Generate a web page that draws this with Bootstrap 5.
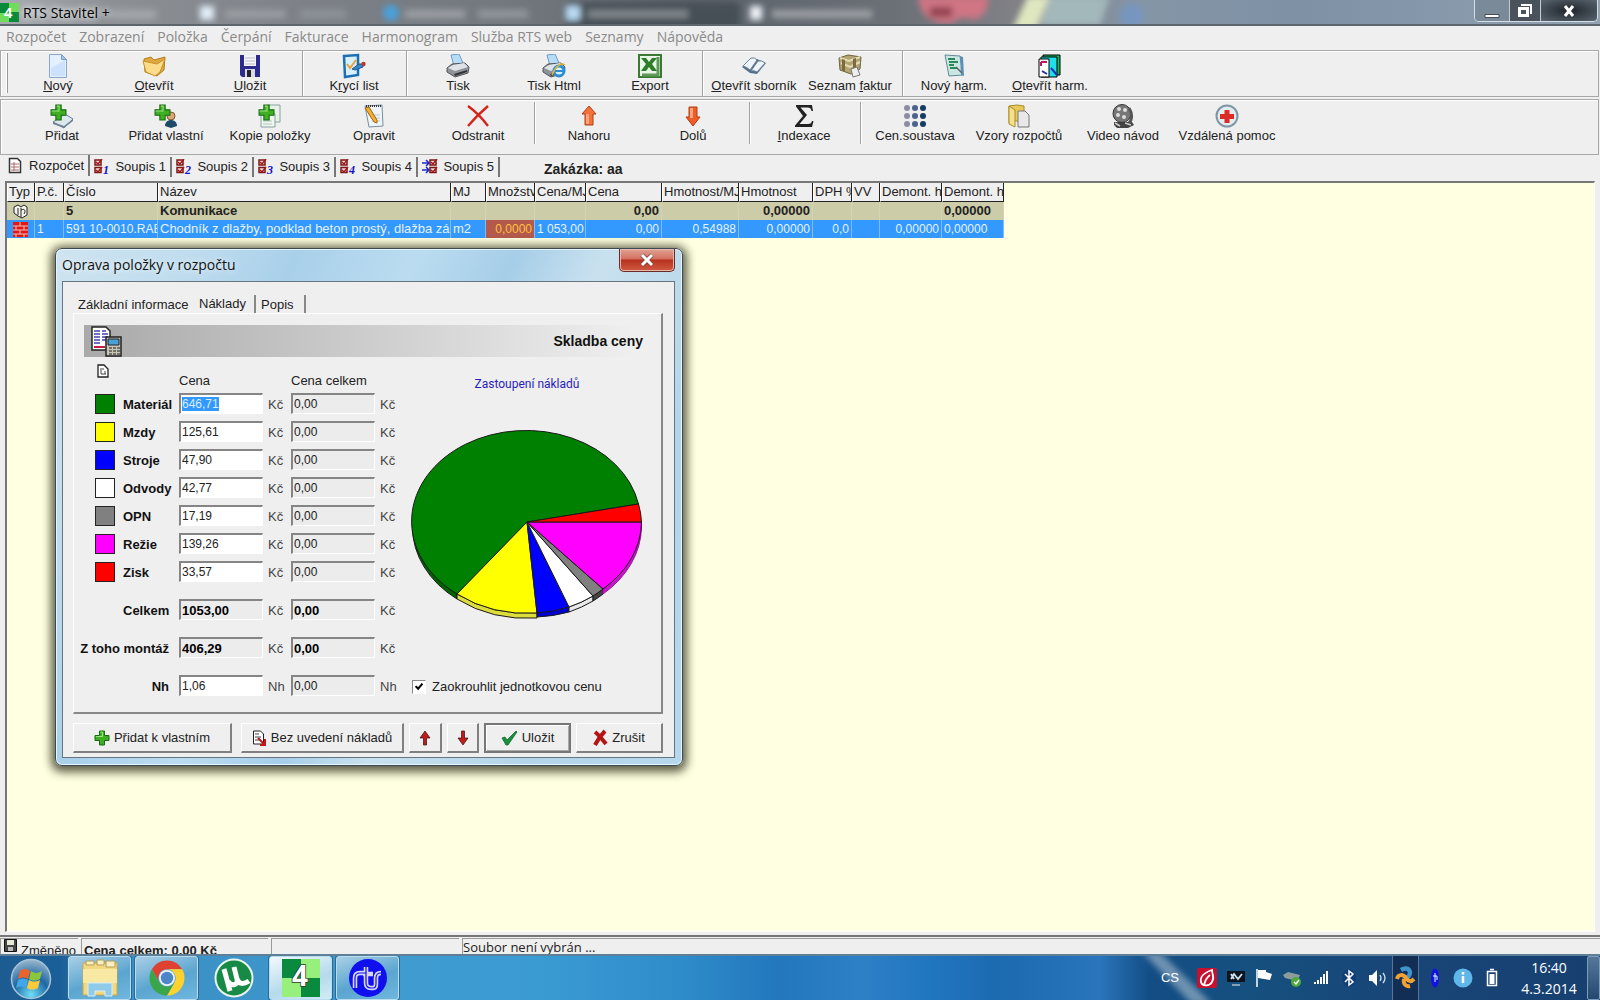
<!DOCTYPE html>
<html lang="cs">
<head>
<meta charset="utf-8">
<meta name="viewport" content="width=device-width, initial-scale=1">
<title>RTS Stavitel +</title>
<link href="https://cdn.jsdelivr.net/npm/bootstrap@5.3.0/dist/css/bootstrap.min.css" rel="stylesheet">
<style>
:root{--ui:"Liberation Sans",Arial,sans-serif;--seg:"Open Sans","Noto Sans",sans-serif;--face:#efefef}
body{font:13px/16px var(--ui);color:#222;background:var(--face);overflow:hidden}
svg{flex:none;display:block;overflow:visible}
button{font:inherit;color:inherit}
.app{height:100vh;min-height:640px}
/* title bar */
.titlebar{height:26px;background:linear-gradient(90deg,#a9adb1 0,#8d9196 110px,#7d8288 300px,#72777e 520px,#5c636b 700px,#6c7178 900px,#858489 1040px,#8495a6 1140px,#7f91a5 1300px,#8799ab 1460px,#93a1b0);border-bottom:2px solid #5d656d;overflow:hidden}
.glass{left:0;top:0;height:24px;width:100%;overflow:hidden}
.caption{font:14px/25px var(--seg);color:#000;text-shadow:0 0 6px #fff,0 0 8px #fff}
.winbtns{border:1px solid #d5dde5;border-top:0;border-radius:0 0 5px 5px;height:22px;overflow:hidden;margin-right:2px}
.winbtns button{border:0;border-right:1px solid #c3ccd4;background:#7b8a99;padding:0;height:21px;display:flex;align-items:center;justify-content:center}
.winbtns button:nth-child(2){background:#4a525b}
.winbtns button:nth-child(3){border:0;background:radial-gradient(ellipse at center,#20242a,#596570)}
/* menu */
.menubar{height:24px;padding:0 0 2px 6px;gap:13px;font:14px/18px var(--seg)}
.menubar a{color:#8a8a8a;text-decoration:none}
/* tool strips */
.strip{border:1px solid #a8a8a8;box-shadow:inset 1px 1px #fff;padding:3px 0 0 9px;margin-right:1px}
.strip button{border:0;background:none;padding:0;width:96px;display:flex;flex-direction:column;align-items:center;white-space:nowrap}
.strip-top{height:47px}
.strip-low{height:56px;margin-top:2px;padding-top:4px}
.strip-low button{width:104px}
.strip .vr-sep{width:8px;margin-top:-3px;background:linear-gradient(#a3a3a3,#a3a3a3) 4px 0/1px 100% no-repeat,linear-gradient(#fff,#fff) 5px 0/1px 100% no-repeat}
.strip-low .vr-sep{width:7px;height:42px;margin-top:-2px}
.grip{width:2px;height:40px;margin:-1px 2px 0 -4px;border-right:1px solid #999;border-left:1px solid #fff}
/* tabs */
.maintabs{height:26px;padding-left:8px}
.maintabs button{border:0;border-right:2px solid #777;background:none;padding:0 4px;height:20px;margin:2px 0 0;width:82px;display:flex;align-items:center;justify-content:space-between;white-space:nowrap}
.maintabs button.active{margin-top:0;padding-left:0;height:21px}
.order{font:bold 14px/18px var(--ui);margin:5px 0 0 44px}
/* grid */
.sheet{background:#ffffe1;border:2px solid #777;border-right:1px solid #fff;border-bottom:1px solid #fff;margin:0 5px 3px 5px;overflow:hidden;min-height:0}
.budget{table-layout:fixed;width:997px;border-collapse:separate;border-spacing:0}
.budget th,.budget td{height:18px;padding:0 2px;line-height:18px;overflow:hidden;white-space:nowrap;border-right:1px solid #dcdcc4}
.budget th{height:19px;padding:0 1px;font-weight:400;background:var(--face);border-right:1px solid #222;border-bottom:1px solid #222;border-left:1px solid #fff}
.budget .grp td{background:#cccca8;font-weight:700;border-color:#d4d4b4}
.budget .sel td{background:#3399ff;color:#e4f2ff;border-color:#7fbdf5;font-size:12px}
.budget .sel td.edit{background:#b35a4c;color:#ffc03c}
.budget .sel td.wide{font-size:13px}
/* status bar */
.statusbar{height:19px;border-top:2px solid #777;padding:1px 0 0;gap:3px;overflow:hidden}
.statusbar>div{border-top:1px solid #9a9a9a;border-left:1px solid #9a9a9a;height:17px;overflow:hidden;white-space:nowrap}
/* dialog */
.dlg{left:55px;top:248px;width:628px;border:1px solid #3d4a54;border-radius:7px;background:linear-gradient(115deg,#cfe4f0 0,#bedcee 130px,#a9d0ea 220px,#bbdcf0 330px,#a6cee8 420px,#c9e1ef 500px,#b3d5e9 640px,#b5d8ee);box-shadow:inset 0 0 0 1px #e6f4fb,0 2px 10px 4px rgba(40,40,20,.75);padding:0 7px 7px 6px}
.dlg-head{height:32px}
.dlg-title{font:14px/32px var(--seg);color:#111;text-shadow:0 0 6px #fff}
.dlg-close{width:56px;height:23px;border:1px solid #6b2a25;border-top:0;border-radius:0 0 5px 5px;background:linear-gradient(#e0a396,#d2705f 45%,#b8311f 50%,#cf5b42);box-shadow:inset 0 0 0 1px #eab7ac;padding:0;display:flex;align-items:center;justify-content:center}
.client{border:1px solid #66757f;background:var(--face);padding:13px 11px 4px 10px}
.subtabs button{border:0;background:none;padding:2px 0 0 5px;text-align:left;height:18px;border-right:2px solid transparent;white-space:nowrap}
.subtabs button.active{padding-top:0}
.page{border:1px solid #fff;border-right:2px solid #888;border-bottom:2px solid #888;height:401px;padding-top:11px}
.banner{height:32px;margin:0 10px;padding:0 8px 0 7px;background:linear-gradient(90deg,#a9a9a9,#efefef 97%);font:bold 14px/32px var(--ui);color:#111}
.formcol{width:332px}
.frow{height:28px}
.frow.total{height:38px}
.sw{width:20px;height:20px;border:1px solid #222;margin:1px 8px 0 21px}
.frow label{font-weight:700;width:56px;padding-top:4px;white-space:nowrap;color:#111}
.frow label.long{width:105px;padding-right:10px;text-align:right}
.frow input{width:84px;height:21px;border:0;border-top:2px solid #858585;border-left:2px solid #858585;border-right:1px solid #fff;border-bottom:1px solid #fff;padding:0 1px;font:12px/17px var(--ui);color:#222;background:#fff;outline:0;border-radius:0}
.frow input[readonly]{background:#ececec}
.frow.total input.sum{font:bold 13px/17px var(--ui);color:#000}
.frow input::selection{background:#3399ff;color:#d8ecff}
.frow span{width:28px;padding:4px 0 0 5px;color:#444}
.charttitle{font:12px/16px Roboto,var(--ui);color:#2a1eb8}
.rounding .form-check-input{width:14px;height:14px;margin:1px 6px 0 0;float:none;border:1px solid #888;border-right-color:#fff;border-bottom-color:#fff;border-radius:0;background-color:#fff;box-shadow:none}
.rounding .form-check-input:checked{background-image:url("data:image/svg+xml,%3csvg xmlns='http://www.w3.org/2000/svg' viewBox='0 0 14 14'%3e%3cpath fill='none' stroke='%23000' stroke-width='2.4' d='M3 6l3 3 5-6'/%3e%3c/svg%3e")}
.actions{gap:5px;padding-top:9px}
.push{height:30px;border:1px solid #fff;border-right:2px solid #808080;border-bottom:2px solid #808080;background:var(--face);padding:0;display:flex;align-items:center;justify-content:center;gap:4px;white-space:nowrap;width:87px}
.push.primary{border:2px solid #777;box-shadow:inset 1px 1px #fff,inset -1px -1px #aaa}
/* taskbar */
.taskbar{height:46px;border-top:2px solid #5f7f96;overflow:hidden;background:linear-gradient(90deg,#1d5c91 0,#1b5f98 60px,#3a8fc4 130px,#3f9bd0 420px,#3a9bd3 540px,#2f8cca 680px,#2277bd 780px,#2e80c6 860px,#2076c0 930px,#1c6ab0 1000px,#2a75bb 1100px,#134d84 1150px,#15507f 1250px,#184577 1400px,#174070)}
.orb{width:68px;border:0;background:none;padding:0 0 0 10px}
.task{width:63px;height:44px;border:1px solid #b8dcf0;border-radius:3px;background:linear-gradient(160deg,#a9cfe6,#5ba5d0 55%,#6fb7de);padding:0;margin-right:4px;display:flex;align-items:center;justify-content:center;box-shadow:0 0 0 1px #2c6a94}
.task.front{background:linear-gradient(160deg,#f2f9fc,#b4daec 60%,#d2ecf6)}
.task.flat{background:none;border-color:transparent;box-shadow:none}
.streak{left:1130px;top:0;overflow:hidden}
.tray{gap:10px;color:#fff}
.clock{font:14px/21px var(--seg);text-align:center;width:76px}
.agent{margin:0 -2px 0 -5px}
.peek{width:13px;height:44px;border:1px solid #7d9cba;background:linear-gradient(#56779a,#23486f);border-radius:2px;padding:0;margin-left:-10px}
</style>
</head>
<body>
<svg width="0" height="0" class="position-absolute" aria-hidden="true">
<defs>
<symbol id="plus" viewBox="0 0 16 16"><path d="M5.500 1h5v4.500H15v5h-4.500V15h-5v-4.500H1v-5h4.500z" fill="#3fae22" stroke="#176b12"/><path d="M6.500 2h2v4.500H2v-.1" fill="none" stroke="#9be47c"/></symbol>
<symbol id="printer" viewBox="0 0 24 24"><path d="M5 1l8-1 4 9-9 3z" fill="#b7dcf8" stroke="#6c9cc4"/><path d="M1 14l5-4 13-1 4 4-1 6-13 4-8-5z" fill="#8f949b" stroke="#50555c"/><path d="M2 14l7 3 13-4-4-4-11 2z" fill="#dfe3e8"/><path d="M8 20l13-4v2l-12 4z" fill="#333"/></symbol>
<symbol id="checks" viewBox="0 0 9 15"><path d="M1 1h6v5H1zM1 8.500h6v5H1z" fill="#f3d7d7" stroke="#7c1616" stroke-width="1.500"/><path d="M2 3l2 2 4-5M2 11l2 2 4-5" fill="none" stroke="#a01818" stroke-width="1.500"/></symbol>
<symbol id="book" viewBox="0 0 24 24"><path d="M0 13L9 4l6 1 9 4-9 11-7-1z" fill="#53708a"/><path d="M1 12L9 4q4-1 6 2L8 16q-3-3-7-4zM9 17l7-10q4-1 7 2l-8 9q-3-2-6-1z" fill="#eef4f9" stroke="#6b8296"/></symbol>
</defs>
</svg>

<div class="app d-flex flex-column position-relative">
  <header class="titlebar d-flex justify-content-between position-relative flex-shrink-0">
    <svg class="glass position-absolute" aria-hidden="true">
      <filter id="soft" x="-20%" y="-60%" width="140%" height="220%"><feGaussianBlur stdDeviation="3"/></filter>
      <g filter="url(#soft)">
        <rect x="565" y="2" width="175" height="30" rx="6" fill="#474f57"/>
        <rect x="110" y="10" width="46" height="9" fill="#a3a7ab"/>
        <rect x="200" y="6" width="14" height="14" fill="#e2edf7"/><rect x="225" y="10" width="60" height="8" fill="#9a9ea3"/><rect x="300" y="10" width="46" height="8" fill="#8e9398"/>
        <circle cx="391" cy="13" r="8" fill="#4aa1dc"/><rect x="405" y="10" width="60" height="8" fill="#9ba0a5"/><rect x="478" y="10" width="50" height="8" fill="#92979c"/>
        <rect x="566" y="6" width="14" height="14" fill="#b9dcf3"/><rect x="588" y="10" width="100" height="8" fill="#7f868c"/>
        <rect x="750" y="6" width="12" height="14" fill="#eef3f8"/><rect x="772" y="10" width="100" height="8" fill="#9ca0a5"/>
        <path d="M918-4h70q2 18-14 24-12-6-24 4-30 0-32-28z" fill="#cf7583"/><rect x="930" y="7" width="22" height="10" fill="#92424e"/>
        <path d="M1012 30l16-34h22l-14 34z" fill="#dfe6c0"/><path d="M1050-4h60l-10 30h-60z" fill="#a3b8bb"/><circle cx="1132" cy="16" r="12" fill="#7696c0"/>
      </g>
    </svg>
    <div class="d-flex position-relative">
      <svg width="19" height="22" viewBox="0 0 19 22"><path d="M0 3h19v19H0z" fill="#0b8a3a"/><path d="M9 3h10v9H9zM0 13h9v9H0z" fill="#6fdc5c"/><text x="4" y="18" font-family="Liberation Sans" font-weight="700" font-size="15" fill="#fff">4</text></svg>
      <div class="caption ps-1">RTS Stavitel +</div>
    </div>
    <div class="winbtns d-flex position-relative">
      <button aria-label="Minimalizovat" style="width:35px"><svg width="18" height="18"><path d="M2 12.500h14v3H2z" fill="#fff" stroke="#454e57"/></svg></button>
      <button aria-label="Obnovit" style="width:31px"><svg width="18" height="18"><path d="M5 3h10v9" fill="none" stroke="#fff" stroke-width="2"/><path d="M3.500 6.500h8v7h-8z" fill="none" stroke="#fff" stroke-width="3"/></svg></button>
      <button aria-label="Zavřít" style="width:56px"><svg width="14" height="14"><path d="M3 2l8 10M11 2L3 12" stroke="#fff" stroke-width="3"/></svg></button>
    </div>
  </header>

  <nav class="menubar d-flex align-items-center flex-shrink-0">
    <a href="#">Rozpočet</a><a href="#">Zobrazení</a><a href="#">Položka</a><a href="#">Čerpání</a><a href="#">Fakturace</a><a href="#">Harmonogram</a><a href="#">Služba RTS web</a><a href="#">Seznamy</a><a href="#">Nápověda</a>
  </nav>

  <div class="strip strip-top d-flex flex-shrink-0">
    <i class="grip"></i>
    <button><svg width="24" height="24"><path d="M3.500.500h12l5 5v18h-17z" fill="#e3f0fd" stroke="#8ba6c6"/><path d="M5 14l14-8v16H5z" fill="#cbe2fa"/><path d="M15.500.500v5h5z" fill="#9cc3ea" stroke="#7d9dc2"/></svg><span><u>N</u>ový</span></button>
    <button><svg width="24" height="24"><path d="M2 5l7-2 3 3 11-3-1 13-7 6-12-4z" fill="#e0a93e" stroke="#b27d20"/><path d="M1 7l14 3 8-5-5 13-5 4-9-4z" fill="#fbdc88" stroke="#c7922f"/></svg><span><u>O</u>tevřít</span></button>
    <button><svg width="24" height="24"><path d="M2 1h20v22H4l-2-2z" fill="#2c2a8c"/><path d="M6 1h12v11H6z" fill="#f4f4fb"/><path d="M7 4h10M7 7h10M7 10h10" stroke="#b9b9cc"/><path d="M7 15h10v8H7z" fill="#d9d9ea"/><path d="M9 16h4v7H9z" fill="#222"/></svg><span><u>U</u>ložit</span></button>
    <i class="vr-sep"></i>
    <button><svg width="24" height="24"><path d="M2 2l14-1v20L3 23z" fill="#d8efff" stroke="#1b6fb5" stroke-width="2.500"/><path d="M5 10l3 4 6-8" fill="none" stroke="#e8a33b" stroke-width="2"/><path d="M10 15l7-5h4v3l-8 3z" fill="#3987c8" stroke="#195a92"/><circle cx="21.500" cy="10" r="2.200" fill="#b33a2e"/></svg><span>K<u>r</u>ycí list</span></button>
    <i class="vr-sep"></i>
    <button><svg width="24" height="24"><use href="#printer"/></svg><span>Tisk</span></button>
    <button><svg width="24" height="24"><use href="#printer"/><circle cx="17" cy="17" r="5" fill="#d9f0ff" stroke="#2c8fd6" stroke-width="3"/><path d="M13 17h8" stroke="#2c8fd6" stroke-width="2"/><path d="M10 21C13 13 19 8 23 11" fill="none" stroke="#e5b63a" stroke-width="1.500"/></svg><span>Tisk Html</span></button>
    <button><svg width="24" height="24"><path d="M1 1h22v22H1z" fill="#e9f5e6" stroke="#3b7a35" stroke-width="2"/><path d="M20 3v18H4" fill="none" stroke="#5c9a56" stroke-width="3"/><path d="M3 4h5l3 4 3-4h5l-5 6 5 7h-5l-3-4-3 4H3l5-7z" fill="#2b7d28"/></svg><span>Export</span></button>
    <i class="vr-sep"></i>
    <button><svg width="24" height="24"><use href="#book"/></svg><span><u>O</u>tevřít sborník</span></button>
    <button><svg width="24" height="24"><path d="M1 4l9-3 13 2-1 12-9 5-11-4z" fill="#b3a672" stroke="#6d6440"/><path d="M2 4l9 3 11-4M3 9l9 4 10-5" fill="none" stroke="#e3ddb4" stroke-width="2"/><path d="M4 5l3 1v12l-3-2zM15 5l3-1v11l-3 1z" fill="#7d6a40"/><path d="M13 15l6-2 3 8-7 2z" fill="#eee" stroke="#777"/></svg><span>Seznam <u>f</u>aktur</span></button>
    <i class="vr-sep"></i>
    <button><svg width="24" height="24"><path d="M3 1l15 1 3 19-14 1z" fill="#c9e6e3" stroke="#5f8b96"/><path d="M18 2l3 1 1 19-3-1z" fill="#5e8fb5"/><path d="M6 5h7M7 8h9M7 11h5M8 14h7" stroke="#2b8a58" stroke-width="1.800"/><path d="M14 13l6 6" stroke="#666" stroke-width="1.500"/></svg><span>Nový h<u>a</u>rm.</span></button>
    <button><svg width="24" height="24"><path d="M5 1h17v20H5z" fill="#19b35b" stroke="#000"/><path d="M3 3h16v20H3z" fill="#1fe0e8" stroke="#000"/><path d="M1 5h10v18H1z" fill="#fff" stroke="#000"/><path d="M3 8h6M3 8v4" stroke="#c01560" stroke-width="2"/><path d="M4 17l5 3M13 14l6 7" stroke="#2030b0" stroke-width="2"/></svg><span><u>O</u>tevřít harm.</span></button>
  </div>

  <div class="strip strip-low d-flex flex-shrink-0">
    <button><svg width="24" height="24"><g transform="translate(2 3)"><path d="M1 15l12-8 8 5-9 9z" fill="#dce7ee" stroke="#627b8e"/><path d="M1 15l11 4 9-7v2l-9 7-11-4z" fill="#6e8496"/></g><use href="#plus" width="17" height="17"/></svg><span>Přidat</span></button>
    <button><svg width="24" height="24"><circle cx="17" cy="12" r="4" fill="#dca878" stroke="#80582f"/><path d="M11 22c0-8 12-8 12 0l-6 2z" fill="#1c4a68"/><use href="#plus" width="17" height="17"/></svg><span>Přidat vlastní</span></button>
    <button><svg width="24" height="24"><path d="M10 1h12v17H10z" fill="#e6f2e6" stroke="#8aa0a6"/><path d="M3 7h11l3 3v13H3z" fill="#eef6ee" stroke="#8aa0a6"/><path d="M5 17h9M5 20h9" stroke="#b4c8c0"/><use href="#plus" width="17" height="17"/></svg><span>Kopie položky</span></button>
    <button><svg width="24" height="24"><path d="M3 2l17-1 1 21-14 1z" fill="#eef5fa" stroke="#7590a3"/><path d="M4 2h15" stroke="#333" stroke-width="2" stroke-dasharray="1 1"/><path d="M9 11h9M10 14h8M10 17h8" stroke="#b9cbd6"/><path d="M3 4l4-1 8 13v3l-3-1z" fill="#f0b030" stroke="#a0651b"/></svg><span>Opravit</span></button>
    <button><svg width="24" height="24"><path d="M2 2c7 5 14 12 20 20M22 2C15 8 8 15 2 22" fill="none" stroke="#d42418" stroke-width="2.400"/></svg><span>Odstranit</span></button>
    <i class="vr-sep"></i>
    <button><svg width="24" height="24"><path d="M12 2l7 8h-3v11H8V10H5z" fill="#f4713a" stroke="#b03c13"/><path d="M9 10h3v10H9z" fill="#fba37a"/></svg><span>Nahoru</span></button>
    <button><svg width="24" height="24"><path d="M12 22l7-9h-3V3H8v10H5z" fill="#ee5c28" stroke="#b03c13"/><path d="M9 4h3v10H9z" fill="#fba37a"/></svg><span>Dolů</span></button>
    <i class="vr-sep"></i>
    <button><svg width="24" height="24"><path d="M4 1h16l1 6h-1.500c-.5-2.500-1.500-3.500-4-3.500H8.500L15 11 7.500 20H16c2.500 0 3.500-1 4-3h1.500L20 23H3v-1.500L11 12 4 2.500z" fill="#222"/></svg><span><u>I</u>ndexace</span></button>
    <i class="vr-sep"></i>
    <button><svg width="24" height="24"><g fill="#8c8ca6"><circle cx="4" cy="4" r="3"/><circle cx="4" cy="12" r="3"/><circle cx="4" cy="20" r="3"/></g><g fill="#4d6389"><circle cx="12" cy="4" r="3"/><circle cx="12" cy="12" r="3"/><circle cx="12" cy="20" r="3"/></g><g fill="#163c66"><circle cx="20" cy="4" r="3"/><circle cx="20" cy="12" r="3"/><circle cx="20" cy="20" r="3"/></g></svg><span>Cen.soustava</span></button>
    <button><svg width="24" height="24"><path d="M2 2l8-1 7 1v15H7l-5 2z" fill="#e8c85a" stroke="#a78c2a"/><path d="M2 2l6 4v17l-6-3z" fill="#f6e08a" stroke="#a78c2a"/><path d="M11 7h7l4 4v12H11z" fill="#e8e8ea" stroke="#777"/></svg><span>Vzory rozpočtů</span></button>
    <button><svg width="24" height="24"><path d="M3 18h18l2 3-6 3H6l-3-3z" fill="#444"/><circle cx="11" cy="9.500" r="9" fill="#777" stroke="#333"/><g fill="#ddd"><circle cx="8" cy="5" r="2"/><circle cx="14" cy="6" r="2"/><circle cx="7" cy="11" r="2"/><circle cx="13" cy="13" r="2"/></g><path d="M18 4c4 6 3 12 0 15" stroke="#555" stroke-width="3" fill="none"/><path d="M4 19l5 3M14 19l6 2" stroke="#ccc" stroke-width="1.500"/></svg><span>Video návod</span></button>
    <button><svg width="24" height="24"><circle cx="12" cy="12" r="10.500" fill="#e4ecef" stroke="#7e97a4" stroke-width="2"/><path d="M9.500 6h5v4H19v5h-4.500v4h-5v-4H5v-5h4.500z" fill="#dc2b26"/></svg><span>Vzdálená pomoc</span></button>
  </div>

  <div class="maintabs d-flex flex-shrink-0" role="tablist">
    <button class="active" role="tab"><svg width="14" height="17"><path d="M1.500 1.500h8l3 3v11h-11z" fill="#fff" stroke="#333" stroke-width="1.500"/><path d="M3 7h8M3 10h8M3 13h8M6 5v9" stroke="#b06868"/></svg>Rozpočet</button>
    <button role="tab"><svg width="16" height="16"><use href="#checks" width="9" height="15"/><text x="9" y="15" font-family="Liberation Serif" font-style="italic" font-weight="700" font-size="12" fill="#1414c8">1</text></svg>Soupis 1</button>
    <button role="tab"><svg width="16" height="16"><use href="#checks" width="9" height="15"/><text x="9" y="15" font-family="Liberation Serif" font-style="italic" font-weight="700" font-size="12" fill="#1414c8">2</text></svg>Soupis 2</button>
    <button role="tab"><svg width="16" height="16"><use href="#checks" width="9" height="15"/><text x="9" y="15" font-family="Liberation Serif" font-style="italic" font-weight="700" font-size="12" fill="#1414c8">3</text></svg>Soupis 3</button>
    <button role="tab"><svg width="16" height="16"><use href="#checks" width="9" height="15"/><text x="9" y="15" font-family="Liberation Serif" font-style="italic" font-weight="700" font-size="12" fill="#1414c8">4</text></svg>Soupis 4</button>
    <button role="tab"><svg width="16" height="16"><path d="M0 4h6M4 1l3 3-3 3M0 11h6M4 8l3 3-3 3" fill="none" stroke="#1c2cc8" stroke-width="1.500"/><use href="#checks" x="7" width="9" height="15"/></svg>Soupis 5</button>
    <div class="order">Zakázka: aa</div>
  </div>

  <main class="sheet flex-grow-1">
    <table class="budget">
      <colgroup><col style="width:28px"><col style="width:29px"><col style="width:94px"><col style="width:293px"><col style="width:35px"><col style="width:49px"><col style="width:51px"><col style="width:76px"><col style="width:77px"><col style="width:74px"><col style="width:39px"><col style="width:28px"><col style="width:62px"><col style="width:62px"></colgroup>
      <thead><tr><th>Typ</th><th>P.č.</th><th>Číslo</th><th>Název</th><th>MJ</th><th>Množství</th><th>Cena/MJ</th><th>Cena</th><th>Hmotnost/MJ</th><th>Hmotnost</th><th>DPH %</th><th>VV</th><th>Demont. h</th><th>Demont. h</th></tr></thead>
      <tbody>
        <tr class="grp"><td><svg class="ms-1" width="15" height="15"><path d="M1 3l4-2 3 2 3-2 3 2v8l-5 3-4-2-4-3z" fill="#f4f4ec" stroke="#222"/><path d="M5 4v7M8 4v9M8 6c4-2 5 1 3 4" fill="none" stroke="#222"/></svg></td><td></td><td>5</td><td>Komunikace</td><td></td><td></td><td></td><td class="text-end">0,00</td><td></td><td class="text-end">0,00000</td><td></td><td></td><td></td><td>0,00000</td></tr>
        <tr class="sel"><td><svg class="ms-1" width="15" height="15"><path d="M0 0h15v15H0z" fill="#e01818"/><path d="M0 4h15M0 8h15M0 12h15M7 0v4M3 4v4M11 4v4M7 8v4M3 12v3M11 12v3" stroke="#f0c0b8"/></svg></td><td>1</td><td>591 10-0010.RAB</td><td class="wide">Chodník z dlažby, podklad beton prostý, dlažba zámková</td><td class="wide">m2</td><td class="edit text-end">0,0000</td><td>1 053,00</td><td class="text-end">0,00</td><td class="text-end">0,54988</td><td class="text-end">0,00000</td><td class="text-end">0,0</td><td></td><td class="text-end">0,00000</td><td>0,00000</td></tr>
      </tbody>
    </table>
  </main>

  <div class="statusbar d-flex flex-shrink-0">
    <div class="d-flex" style="width:78px"><svg class="flex-shrink-0" style="margin-left:3px" width="13" height="13"><path d="M.500.500h12v12H.500z" fill="#444" stroke="#111"/><path d="M3 1h7v5H3z" fill="#e8e8d8"/><path d="M4 8h5v4H4z" fill="#bbb"/></svg><span class="pt-1 ps-1">Změněno</span></div>
    <div class="pt-1" style="width:187px;padding-left:2px;font:bold 13px/16px var(--ui)">Cena celkem: 0,00 Kč</div>
    <div style="width:188px"></div>
    <div class="flex-grow-1" style="font:13px/16px var(--seg)">Soubor není vybrán ...</div>
  </div>

  <footer class="taskbar d-flex justify-content-between flex-shrink-0 position-relative">
    <svg class="streak position-absolute" width="90" height="44" aria-hidden="true"><path d="M12-4h18l52 52H62z" fill="#b9cbd8" opacity=".55" filter="url(#soft)"/></svg>
    <div class="d-flex">
      <button class="orb" aria-label="Start"><svg width="42" height="42"><defs><radialGradient id="o" cx=".5" cy=".9" r=".9"><stop offset="0" stop-color="#6fe0fa"/><stop offset=".5" stop-color="#1d68a4"/><stop offset="1" stop-color="#9cb8cc"/></radialGradient></defs><circle cx="21" cy="22" r="19.500" fill="url(#o)" stroke="#a6c4d6" stroke-width="1.500"/><path d="M10 14c4-3 7-2 10 0l-2 8c-3-2-6-2-10 0z" fill="#e9632a"/><path d="M21 14c3 2 6 3 11 0l-2 8c-4 2-7 2-11 0z" fill="#8cc63e"/><path d="M8 23c4-2 7-2 10 0l-2 8c-4-2-6-2-10 0z" fill="#42a6e8"/><path d="M19 23c4 2 7 2 11 0l-2 8c-4 2-7 2-11 0z" fill="#fcca3c"/></svg></button>
      <button class="task" aria-label="Průzkumník"><svg width="38" height="36"><path d="M2 3h34v32H2z" fill="#f1d983" stroke="#c8a64c"/><path d="M5 1h8v4H5zM16 0h7v5h-7zM25 1h9v6h-9z" fill="#f9efc4" stroke="#b79c50"/><path d="M2 9h34v14H2z" fill="#f8e8a4"/><path d="M7 23h24v13h-7v-5H14v5H7z" fill="#8fcbe8" stroke="#d6eef8"/></svg></button>
      <button class="task" aria-label="Chrome"><svg width="36" height="36" viewBox="-18 -18 36 36"><path d="M-15.200-8.700A17.500 17.500 0 0 1 15.200-8.700H0A8.700 8.700 0 0 0-7.500 4.400z" fill="#de4132"/><path d="M15.200-8.700A17.500 17.500 0 0 1 0 17.500L7.500 4.400A8.700 8.700 0 0 0 0-8.700z" fill="#fdd22e"/><path d="M-15.200-8.700A17.500 17.500 0 0 0 0 17.500L7.500 4.400A8.700 8.700 0 0 1-7.500 4.400z" fill="#3aa64a"/><circle r="8" fill="#eef3f6"/><circle r="6.200" fill="#4a86c8"/></svg></button>
      <button class="task flat" aria-label="µTorrent"><svg width="40" height="40"><circle cx="20" cy="20" r="18.500" fill="#178a45" stroke="#e8f4ec" stroke-width="2"/><path d="M10 11l6 22M14 23c3 6 11 4 9-2L20 9M23 21c2 5 6 6 12 2" fill="none" stroke="#fff" stroke-width="5"/></svg></button>
      <button class="task front" aria-label="RTS Stavitel"><svg width="38" height="38"><path d="M0 0h38v38H0z" fill="#0a8a3c"/><path d="M19 0h19v19H19zM0 19h19v19H0z" fill="#97ef7c"/><text x="10" y="27" font-family="Open Sans" font-weight="700" font-size="28" fill="#fff" stroke="#333" stroke-width="1.500" paint-order="stroke">4</text></svg></button>
      <button class="task" aria-label="RTS"><svg width="40" height="40"><circle cx="20" cy="20" r="19" fill="#1010ee"/><path d="M7 30V20q0-5 5-5h6M18 9v16q0 5 5 5h2q3 0 3-4v-6q0-5 5-5M15 16h10" fill="none" stroke="#d7d7f8" stroke-width="4.500"/><path d="M7 30V20q0-5 5-5h6M18 9v16q0 5 5 5h2q3 0 3-4v-6q0-5 5-5" fill="none" stroke="#1010ee" stroke-width="1.200"/></svg></button>
    </div>
    <div class="tray d-flex align-items-center position-relative">
      <span class="pe-2">CS</span>
      <svg width="20" height="20"><rect width="20" height="20" rx="2" fill="#c8102e"/><path d="M15 2C4 6 3 10 4 14s8 5 11 0 0-7 0-12zM13 7c-4 3-5 6-6 10" fill="#c8102e" stroke="#fff" stroke-width="1.800"/></svg>
      <svg width="18" height="18"><path d="M0 2h18v11H0z" fill="#0c1420"/><path d="M5 15h8v2H5z" fill="#8aa0b0"/><path d="M4 10l3-5 4 5 4-5M4 5l3 5" stroke="#cfe2ee" stroke-width="1.800" fill="none"/></svg>
      <svg width="18" height="20"><path d="M2 1v18" stroke="#fff" stroke-width="1.500"/><path d="M3 2h8v2l6 2-2 6-6-1-6-1z" fill="#fff"/></svg>
      <svg width="19" height="20"><path d="M0 7l5-3 12 3-3 6-12-3z" fill="#8f9a9a"/><circle cx="13" cy="14" r="5" fill="#4fa83a"/><path d="M11 14l2 2 3-4" fill="none" stroke="#fff" stroke-width="1.300"/></svg>
      <svg width="18" height="16"><path d="M3 12v2M6 10v4M9 7v7M12 4v10M15 1v13" stroke="#fff" stroke-width="2"/></svg>
      <svg width="18" height="20"><ellipse cx="9" cy="10" rx="7" ry="9" fill="#123e78"/><path d="M5 6l8 8-4 3V3l4 3-8 8" fill="none" stroke="#fff" stroke-width="1.500"/></svg>
      <svg width="19" height="20"><path d="M1 7h3l5-5v16l-5-5H1z" fill="#fff"/><path d="M12 7q2 3 0 6M15 5q4 5 0 10" fill="none" stroke="#cfe0ee" stroke-width="1.300"/></svg>
      <svg class="agent" width="27" height="44"><path d="M0 0h27v44H0z" fill="#122e54"/><path d="M.500 0v44M26.500 0v44" stroke="#577699"/><path d="M9 14c8-5 12 3 6 8" fill="none" stroke="#3f94cc" stroke-width="4.500"/><path d="M5 23c1-5 6-5 9-1s5 4 8 1M12 23c-1 5 2 8 6 7" fill="none" stroke="#f2a232" stroke-width="4"/></svg>
      <svg width="16" height="20"><ellipse cx="8" cy="10" rx="4" ry="9.500" fill="#1212e0"/><path d="M8 5v9M6 8h4v4" stroke="#dfe" fill="none"/></svg>
      <svg width="20" height="20"><circle cx="10" cy="10" r="9.500" fill="#5fb6e8"/><path d="M10 8v7M10 4v2.500" stroke="#fff" stroke-width="2.500"/></svg>
      <svg width="18" height="20"><path d="M4.500 3.500h9v14h-9zM7 1.500h4" fill="none" stroke="#fff" stroke-width="1.500"/><path d="M6.500 6h5v10h-5z" fill="#fff"/></svg>
      <div class="clock">16:40<br>4.3.2014</div>
      <button class="peek" aria-label="Zobrazit plochu"></button>
    </div>
  </footer>

  <section class="dlg position-absolute" role="dialog" aria-label="Oprava položky v rozpočtu">
    <div class="dlg-head d-flex justify-content-between">
      <div class="dlg-title">Oprava položky v rozpočtu</div>
      <button class="dlg-close" aria-label="Zavřít"><svg width="16" height="14"><path d="M3 2l10 10M13 2L3 12" stroke="#7a4040" stroke-width="4.500"/><path d="M3 2l10 10M13 2L3 12" stroke="#fff" stroke-width="3"/></svg></button>
    </div>
    <div class="client">
      <div class="subtabs d-flex" role="tablist">
        <button role="tab" style="width:121px">Základní informace</button>
        <button role="tab" class="active" style="width:62px;border-color:#888">Náklady</button>
        <button role="tab" style="width:50px;border-color:#888">Popis</button>
      </div>
      <div class="page">
        <div class="banner d-flex justify-content-between align-items-center">
          <svg width="31" height="31"><path d="M1 1h14l4 4v19H1z" fill="#fff" stroke="#222" stroke-width="1.500"/><path d="M3 5h6M3 8h6M3 11h6M3 14h6M3 17h6M11 5h4M11 8h6M11 11h6M11 14h6" stroke="#4040b0" stroke-width="1.500"/><path d="M3 21h11" stroke="#c02040" stroke-width="2"/><path d="M15 11h15v19H15z" fill="#c9c5b4" stroke="#222" stroke-width="1.500"/><path d="M17 13h11v6H17z" fill="#4aa0d0" stroke="#223"/><path d="M18 22h3M22 22h3M26 22h3M18 25h3M22 25h3M26 25h3M18 28h3M22 28h3M26 28h3" stroke="#555" stroke-width="1.500"/></svg>
          <span>Skladba ceny</span>
        </div>
        <div class="d-flex">
          <div class="formcol">
            <div class="d-flex" style="height:36px">
              <svg style="margin:7px 70px 0 23px" width="12" height="14"><path d="M1 1h6l4 4v8H1z" fill="#fff" stroke="#222" stroke-width="1.300"/><path d="M4 4v6h5M6 4v2M8 7v3" fill="none" stroke="#444"/></svg>
              <span class="align-self-end pb-1" style="width:112px">Cena</span><span class="align-self-end pb-1">Cena celkem</span>
            </div>
            <div class="frow d-flex"><i class="sw" style="background:#008000"></i><label for="c1">Materiál</label><input id="c1" value="646,71"><span>Kč</span><input readonly aria-label="Materiál celkem" value="0,00"><span>Kč</span></div>
            <div class="frow d-flex"><i class="sw" style="background:#ffff00"></i><label for="c2">Mzdy</label><input id="c2" value="125,61"><span>Kč</span><input readonly aria-label="Mzdy celkem" value="0,00"><span>Kč</span></div>
            <div class="frow d-flex"><i class="sw" style="background:#0000ff"></i><label for="c3">Stroje</label><input id="c3" value="47,90"><span>Kč</span><input readonly aria-label="Stroje celkem" value="0,00"><span>Kč</span></div>
            <div class="frow d-flex"><i class="sw" style="background:#ffffff"></i><label for="c4">Odvody</label><input id="c4" value="42,77"><span>Kč</span><input readonly aria-label="Odvody celkem" value="0,00"><span>Kč</span></div>
            <div class="frow d-flex"><i class="sw" style="background:#808080"></i><label for="c5">OPN</label><input id="c5" value="17,19"><span>Kč</span><input readonly aria-label="OPN celkem" value="0,00"><span>Kč</span></div>
            <div class="frow d-flex"><i class="sw" style="background:#ff00ff"></i><label for="c6">Režie</label><input id="c6" value="139,26"><span>Kč</span><input readonly aria-label="Režie celkem" value="0,00"><span>Kč</span></div>
            <div class="frow total d-flex"><i class="sw" style="background:#ff0000"></i><label for="c7">Zisk</label><input id="c7" value="33,57"><span>Kč</span><input readonly aria-label="Zisk celkem" value="0,00"><span>Kč</span></div>
            <div class="frow total d-flex"><i class="sw invisible"></i><label for="c8">Celkem</label><input id="c8" class="sum" readonly value="1053,00"><span>Kč</span><input class="sum" readonly aria-label="Celkem cena" value="0,00"><span>Kč</span></div>
            <div class="frow total d-flex"><label class="long" for="c9">Z toho montáž</label><input id="c9" class="sum" readonly value="406,29"><span>Kč</span><input class="sum" readonly aria-label="Montáž celkem" value="0,00"><span>Kč</span></div>
            <div class="frow d-flex"><label class="long" for="c10">Nh</label><input id="c10" value="1,06"><span>Nh</span><input readonly aria-label="Nh celkem" value="0,00"><span>Nh</span></div>
          </div>
          <div class="d-flex flex-column" style="padding:19px 0 0 6px">
            <div class="charttitle text-center">Zastoupení nákladů</div>
            <svg style="margin:39px 0 60px" width="230" height="188" viewBox="413 431 230 188" stroke="#1a1a1a" stroke-linejoin="round">
              <path d="M413.500 522A114.500 91 0 0 0 458 594v5A114.500 91 0 0 1 413.500 527z" fill="#006400"/>
              <path d="M458 594A114.500 91 0 0 0 538 613v5A114.500 91 0 0 1 458 599z" fill="#dcdc3c"/>
              <path d="M538 612A114.500 91 0 0 0 570 607v5A114.500 91 0 0 1 538 617z" fill="#0000d0"/>
              <path d="M570 607A114.500 91 0 0 0 594 596v5A114.500 91 0 0 1 570 612z" fill="#e8e8e8"/>
              <path d="M594 596A114.500 91 0 0 0 604 589v5A114.500 91 0 0 1 594 601z" fill="#444"/>
              <path d="M604 589A114.500 91 0 0 0 642.500 522v5A114.500 91 0 0 1 604 594z" fill="#c814c8" stroke="#a010a0"/>
              <path d="M528 522L639.500 504A114.500 91 0 1 0 458 594z" fill="#008000"/>
              <path d="M528 522L458 594A114.500 91 0 0 0 538 613z" fill="#ffff00"/>
              <path d="M528 522L538 613A114.500 91 0 0 0 570 607z" fill="#0000ff"/>
              <path d="M528 522L570 607A114.500 91 0 0 0 594 596z" fill="#ffffff"/>
              <path d="M528 522L594 596A114.500 91 0 0 0 604 589z" fill="#808080"/>
              <path d="M528 522L604 589A114.500 91 0 0 0 642.500 522z" fill="#ff00ff"/>
              <path d="M528 522H642.500A114.500 91 0 0 0 639.500 504z" fill="#ff0000"/>
            </svg>
            <div class="rounding d-flex align-items-start"><input class="form-check-input" type="checkbox" id="rnd" checked><label for="rnd">Zaokrouhlit jednotkovou cenu</label></div>
          </div>
        </div>
      </div>
      <div class="actions d-flex">
        <button class="push me-1" style="width:159px"><svg width="16" height="16"><use href="#plus"/></svg>Přidat k vlastním</button>
        <button class="push" style="width:163px"><svg width="15" height="16"><path d="M1.500 1h7l3 3v10h-10z" fill="#fff" stroke="#222"/><path d="M3 4h4M3 7h6M3 10h6" stroke="#445"/><path d="M6 8l7 7M13 9v6H8" fill="none" stroke="#c01818" stroke-width="2"/></svg>Bez uvedení nákladů</button>
        <button class="push" style="width:33px" aria-label="Nahoru"><svg width="12" height="16"><path d="M6 1l5 7H7.500v7h-3V8H1z" fill="#c01c1c" stroke="#301010" stroke-width=".7"/></svg></button>
        <button class="push" style="width:32px" aria-label="Dolů"><svg width="12" height="16"><path d="M6 15l5-7H7.500V1h-3v7H1z" fill="#c01c1c" stroke="#301010" stroke-width=".7"/></svg></button>
        <button class="push primary"><svg width="17" height="16"><path d="M1 8l3-1 2 3 9-9 1 1L7 15H5z" fill="#17923a" stroke="#0c5d22" stroke-width=".7"/></svg>Uložit</button>
        <button class="push"><svg width="15" height="16"><path d="M2 2c4 3 7 7 11 12M12 1C8 5 5 9 2 15" stroke="#b51414" stroke-width="4" fill="none"/></svg>Zrušit</button>
      </div>
    </div>
  </section>
</div>
<script src="https://cdn.jsdelivr.net/npm/bootstrap@5.3.0/dist/js/bootstrap.bundle.min.js"></script>
<script>document.getElementById('c1').focus();document.getElementById('c1').select();</script>
</body>
</html>
